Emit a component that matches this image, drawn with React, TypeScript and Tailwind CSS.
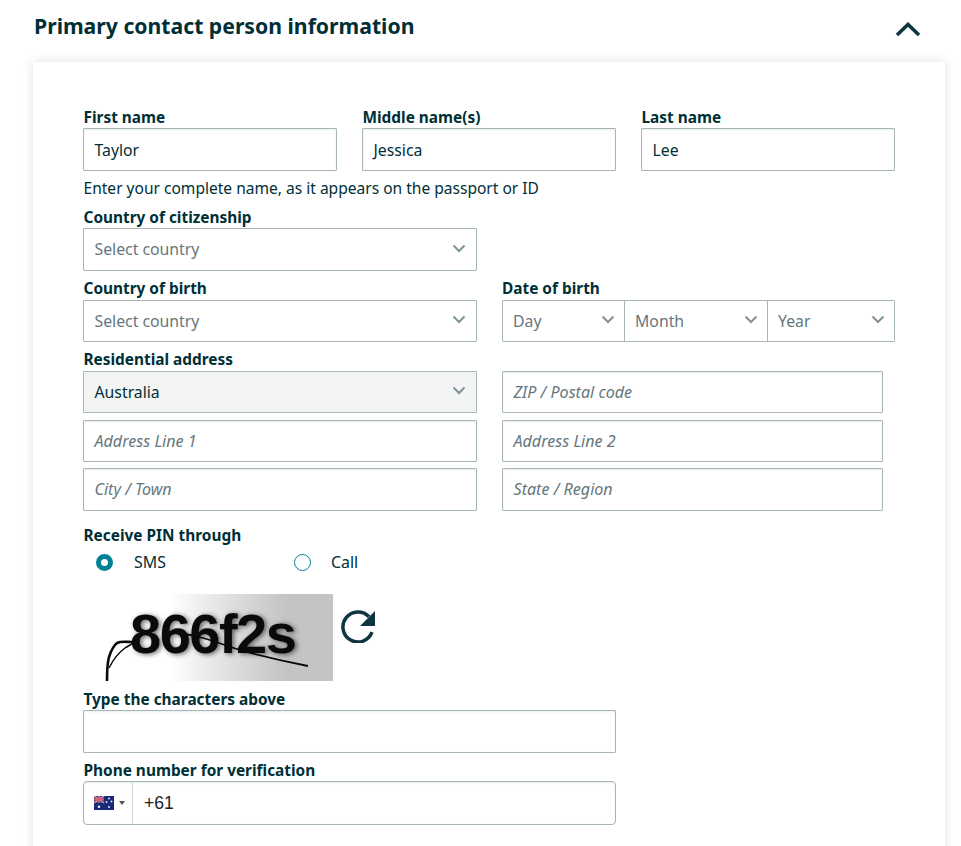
import React from 'react';

const FieldLabel = ({ children, className = 'h-[20px]' }: { children: React.ReactNode; className?: string }) => (
  <label className={`block pl-[0.5px] text-[15.4px] leading-[19.5px] font-bold text-[#002f36] ${className}`}>{children}</label>
);

const Chevron = ({ className }: { className: string }) => (
  <svg viewBox="0 0 14 9" className={className} fill="none" stroke="#7f9299" strokeWidth="2">
    <path d="M1.5 1.5 7 7l5.5-5.5" />
  </svg>
);

const TextBox = ({ value, placeholder, className = '' }: { value?: string; placeholder?: string; className?: string }) => (
  <div className={`flex items-center border border-[#a6b5b8] rounded-[1px] bg-white px-[10.5px] shadow-[inset_0_1px_2px_rgba(15,42,51,0.08)] ${className}`}>
    {value ? (
      <span className="pt-[2px] text-[15.8px] text-[#002f36]">{value}</span>
    ) : (
      <span className="text-[16.1px] italic text-[#66777d]">{placeholder}</span>
    )}
  </div>
);

const SelectBox = ({ text, filled = false, className = 'h-[42.4px]' }: { text: string; filled?: boolean; className?: string }) => (
  <div className={`flex items-center justify-between border border-[#a6b5b8] rounded-[1px] pl-[10.5px] pr-[10px] text-[15.8px] ${filled ? 'bg-[#f3f5f5] text-[#002f36]' : 'bg-white text-[#66777d]'} ${className}`}>
    <span className="pt-[1.5px]">{text}</span>
    <Chevron className="w-[14px] h-[9px] -mt-[3px]" />
  </div>
);

const DatePart = ({ text, className }: { text: string; className: string }) => (
  <div className={`flex items-center justify-between pl-[10px] pr-[9px] text-[15.8px] text-[#66777d] ${className}`}>
    <span className="pt-[1.5px]">{text}</span>
    <Chevron className="w-[14px] h-[9px] -mt-[4px]" />
  </div>
);

const Radio = ({ checked }: { checked?: boolean }) =>
  checked ? (
    <span className="block w-[17px] h-[17px] rounded-full border-[5px] border-[#008296] bg-white" />
  ) : (
    <span className="block w-[17px] h-[17px] rounded-full border border-[#008296] bg-white" />
  );

const Captcha = () => (
  <div className="relative w-[249px] h-[87px] overflow-hidden bg-gradient-to-r from-white from-[34%] to-[#c4c4c4] to-[81%]">
    <span className="absolute left-[46px] top-[8px] text-[56px] leading-[64px] font-bold tracking-[-1.5px] text-[#0a0a0a] font-['Liberation_Sans',sans-serif] [text-shadow:2px_1px_5px_rgba(0,0,0,0.6)]">
      866f2s
    </span>
    <svg viewBox="0 0 249 87" className="absolute inset-0 w-full h-full" fill="none" stroke="#0a0a0a">
      <path d="M23 87c0-10 0-17 2-24 2-6 4-11 8-14 4-2 9-1 15-1" strokeWidth="2.6" />
      <path d="M25 74c4-8 9-15 16-20 3-2 6-3 9-6" strokeWidth="1.5" />
      <path d="M79 37c14 1 28 4 40 7 14 4 27 9 40 13 22 6 44 11 65 15" strokeWidth="1.8" />
    </svg>
  </div>
);

const Refresh = () => (
  <svg viewBox="0 0 36 36" className="w-[36px] h-[36px]" fill="none">
    <path d="M28 9.800A15 15 0 1 0 31 25.200" stroke="#0f3540" strokeWidth="3.500" />
    <path d="M34 4v15H19z" fill="#0f3540" />
  </svg>
);

const AuFlag = () => (
  <svg viewBox="0 0 20 14" className="w-[20px] h-[14px]">
    <rect width="20" height="14" fill="#1a2a7a" />
    <rect y="0" width="10" height="7" fill="#3a3f8c" />
    <path d="M0 0l10 7M10 0 0 7" stroke="#d8a0b0" strokeWidth="1.400" />
    <path d="M5 0v7M0 3.500h10" stroke="#e05a6a" strokeWidth="1.800" />
    <g fill="#e8ecf8">
      <circle cx="5" cy="10.800" r="1.300" />
      <circle cx="15" cy="2.500" r="0.900" />
      <circle cx="12.500" cy="6" r="0.900" />
      <circle cx="17.500" cy="5.500" r="0.900" />
      <circle cx="15" cy="11" r="1" />
    </g>
  </svg>
);

export default function App() {
  return (
    <div className="h-[846px] overflow-hidden bg-white font-['Noto_Sans',sans-serif] text-[#002f36]">
      <div className="flex items-center justify-between h-[62px] pl-[34px] pr-[40px] pb-[11px]">
        <h2 className="text-[21.2px] font-bold leading-[30px] text-[#002f36]">Primary contact person information</h2>
        <svg viewBox="0 0 26 16" className="w-[26px] h-[16px] mt-[6px]" fill="none" stroke="#0f3540" strokeWidth="3.600">
          <path d="M2 14 13 3.500 24 14" />
        </svg>
      </div>

      <div className="ml-[33px] w-[912px] bg-white shadow-[0_0_10px_rgba(15,42,51,0.14)] pt-[46px] pl-[50px] pr-[50px] pb-[40px]">
        <div className="grid grid-cols-3 gap-x-[25px]">
          <div>
            <FieldLabel>First name</FieldLabel>
            <TextBox value="Taylor" className="h-[43px]" />
          </div>
          <div>
            <FieldLabel>Middle name(s)</FieldLabel>
            <TextBox value="Jessica" className="h-[43px]" />
          </div>
          <div>
            <FieldLabel>Last name</FieldLabel>
            <TextBox value="Lee" className="h-[43px]" />
          </div>
        </div>
        <p className="mt-[7px] pl-[0.5px] h-[30px] text-[15.55px] leading-[20px]">Enter your complete name, as it appears on the passport or ID</p>

        <div className="grid grid-cols-[394px_393px] gap-x-[25px]">
          <div>
            <FieldLabel>Country of citizenship</FieldLabel>
            <SelectBox text="Select country" className="h-[43px]" />
          </div>
        </div>

        <div className="grid grid-cols-[394px_393px] gap-x-[25px] mt-[8px]">
          <div>
            <FieldLabel className="h-[21px]">Country of birth</FieldLabel>
            <SelectBox text="Select country" />
          </div>
          <div>
            <FieldLabel className="h-[21px] -ml-[0.5px]">Date of birth</FieldLabel>
            <div className="flex h-[42.4px] border border-[#a6b5b8] rounded-[1px]">
              <DatePart text="Day" className="w-[122px] border-r border-[#a6b5b8]" />
              <DatePart text="Month" className="w-[143px] border-r border-[#a6b5b8]" />
              <DatePart text="Year" className="flex-1" />
            </div>
          </div>
        </div>

        <div className="mt-[7.6px]">
          <FieldLabel className="h-[21px]">Residential address</FieldLabel>
          <div className="grid grid-cols-[394px_381px] gap-x-[25px] gap-y-[6.2px]">
            <SelectBox text="Australia" filled />
            <TextBox placeholder="ZIP / Postal code" className="h-[42.4px]" />
            <TextBox placeholder="Address Line 1" className="h-[42.4px]" />
            <TextBox placeholder="Address Line 2" className="h-[42.4px]" />
            <TextBox placeholder="City / Town" className="h-[42.4px]" />
            <TextBox placeholder="State / Region" className="h-[42.4px]" />
          </div>
        </div>

        <div className="mt-[15.4px]">
          <FieldLabel>Receive PIN through</FieldLabel>
          <div className="flex items-center h-[34px] pl-[13px] text-[15.9px]">
            <Radio checked />
            <span className="ml-[21px] w-[160px]">SMS</span>
            <Radio />
            <span className="ml-[20px]">Call</span>
          </div>
        </div>

        <div className="flex mt-[14px] ml-[1px]">
          <Captcha />
          <div className="ml-[8px] mt-[13px]">
            <Refresh />
          </div>
        </div>

        <div className="mt-[9px] w-[533px]">
          <FieldLabel>Type the characters above</FieldLabel>
          <TextBox className="h-[43px]" />
        </div>

        <div className="mt-[8px] w-[533px]">
          <FieldLabel>Phone number for verification</FieldLabel>
          <div className="flex h-[44px] border border-[#a6b5b8] rounded-[4px] shadow-[inset_0_1px_2px_rgba(15,42,51,0.1)]">
            <div className="flex items-center w-[49px] border-r border-[#c9d2d4] pl-[10px] gap-[5px]">
              <AuFlag />
              <span className="block w-0 h-0 border-x-[3px] border-x-transparent border-t-[4px] border-t-[#555]" />
            </div>
            <div className="flex items-center pl-[11px] text-[17.5px] text-[#222] font-['Liberation_Sans',sans-serif]">+61</div>
          </div>
        </div>
      </div>
    </div>
  );
}
